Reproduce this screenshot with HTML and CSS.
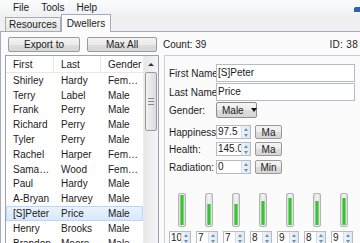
FILE: index.html
```html
<!DOCTYPE html>
<html lang="en">
<head>
    <meta charset="UTF-8">
    <title>Dwellers</title>
    <link rel="stylesheet" href="styles.css">
</head>
<body>
    <div class="menubar">
        <span>File</span>
        <span>Tools</span>
        <span>Help</span>
        <i class="app-icon"></i>
    </div>
    <div class="tabstrip">
        <div class="tab">Resources</div>
        <div class="tab active">Dwellers</div>
    </div>
    <div class="page">
        <div class="toolbar">
            <button class="btn export">Export to</button>
            <button class="btn maxall">Max All</button>
            <span class="count">Count: 39</span>
            <span class="dweller-id">ID: 38</span>
        </div>
        <div class="main">
            <div class="list">
                <div class="list-body">
                    <div class="list-head">
                        <span class="c1">First</span>
                        <span class="c2">Last</span>
                        <span class="c3">Gender</span>
                    </div>
                    <div id="rows"></div>
                </div>
                <div class="scrollbar">
                    <div class="sb-up"><i class="tri-up"></i></div>
                    <div class="sb-thumb"><i></i><i></i><i></i></div>
                </div>
            </div>

            <div class="detail">
                <div class="field">
                    <span class="label">First Name</span>
                    <div class="textbox">[S]Peter</div>
                </div>
                <div class="field second">
                    <span class="label">Last Name</span>
                    <div class="textbox">Price</div>
                </div>
                <div class="field gender">
                    <span class="label">Gender:</span>
                    <div class="combo">Male <i class="tri-down"></i></div>
                </div>
                <div class="field stat happy">
                    <span class="label">Happiness</span>
                    <div class="spin"><span class="spin-val">97.5</span><span class="spin-btns"><i class="tri-up"></i><i class="tri-down"></i></span></div>
                    <button class="btn small">Ma</button>
                </div>
                <div class="field stat health">
                    <span class="label">Health:</span>
                    <div class="spin"><span class="spin-val">145.0</span><span class="spin-btns"><i class="tri-up"></i><i class="tri-down"></i></span></div>
                    <button class="btn small">Ma</button>
                </div>
                <div class="field stat rad">
                    <span class="label">Radiation:</span>
                    <div class="spin"><span class="spin-val">0</span><span class="spin-btns"><i class="tri-up"></i><i class="tri-down"></i></span></div>
                    <button class="btn small">Min</button>
                </div>

                <div class="bars" id="bars"></div>
                <div class="special" id="special"></div>
            </div>
        </div>
    </div>

    <script>
        const dwellers = [
            ['Shirley', 'Hardy', 'Female'],
            ['Terry', 'Label', 'Male'],
            ['Frank', 'Perry', 'Male'],
            ['Richard', 'Perry', 'Male'],
            ['Tyler', 'Perry', 'Male'],
            ['Rachel', 'Harper', 'Female'],
            ['Samantha', 'Wood', 'Female'],
            ['Paul', 'Hardy', 'Male'],
            ['A-Bryan', 'Harvey', 'Male'],
            ['[S]Peter', 'Price', 'Male'],
            ['Henry', 'Brooks', 'Male'],
            ['Brandon', 'Moore', 'Male']
        ];
        const selected = 9;

        document.getElementById('rows').innerHTML = dwellers.map((d, i) =>
            `<div class="row${i === selected ? ' selected' : ''}">
                <span class="c1">${d[0]}</span><span class="c2">${d[1]}</span><span class="c3">${d[2]}</span>
            </div>`
        ).join('');

        // S.P.E.C.I.A.L. values, bars are out of 10
        const stats = [10, 7, 7, 8, 9, 8, 9];
        document.getElementById('bars').innerHTML = stats.map(v =>
            `<div class="bar"><div class="bar-fill" style="height: ${v * 10}%"></div></div>`
        ).join('');
        document.getElementById('special').innerHTML = stats.map(v =>
            `<div class="spin mini"><span class="spin-val">${v}</span><span class="spin-btns"><i class="tri-up"></i><i class="tri-down"></i></span></div>`
        ).join('');
    </script>
</body>
</html>
```

FILE: styles.css
```css
* {
    box-sizing: border-box;
}
body {
    margin: 0;
    width: 360px;
    height: 243px;
    overflow: hidden;
    font-family: "Liberation Sans", Arial, sans-serif;
    font-size: 10px;
    color: #1b1b1b;
    background: #f0f0f0;
}

/* menu */
.menubar {
    position: relative;
    height: 14px;
    display: flex;
    align-items: center;
    gap: 12px;
    padding-left: 13px;
    background: linear-gradient(#fbfcfd, #f0f2f5);
}
.app-icon {
    position: absolute;
    right: 0;
    top: 7px;
    width: 6px;
    height: 5px;
    background: #2a63b8;
    border-radius: 2px 0 0 0;
}

/* tabs */
.tabstrip {
    height: 18px;
    display: flex;
    align-items: flex-end;
    padding-left: 5px;
    border-bottom: 1px solid #a5acb5;
}
.tab {
    height: 14px;
    padding: 0 3px;
    line-height: 13px;
    border: 1px solid #a5acb5;
    border-bottom: none;
    background: linear-gradient(#f3f3f3, #e5e5e5);
}
.tab.active {
    position: relative;
    z-index: 1;
    height: 18px;
    margin-bottom: -1px;
    padding: 0 5px;
    line-height: 17px;
    background: #fbfbfb;
}

/* page */
.page {
    height: 211px;
    padding-left: 4px;
    border-left: 1px solid #a5acb5;
    background: #fbfbfb;
    overflow: hidden;
}
.toolbar {
    display: flex;
    align-items: center;
    height: 15px;
    margin-top: 5px;
    padding-left: 3px;
}
.btn {
    height: 15px;
    padding: 0;
    font-family: inherit;
    font-size: 10px;
    color: #1b1b1b;
    border: 1px solid #9a9a9a;
    border-radius: 2px;
    background: linear-gradient(#f4f4f4 0%, #ebebeb 50%, #dddddd 51%, #d6d6d6 100%);
}
.btn.export {
    width: 72px;
}
.btn.maxall {
    width: 70px;
    margin-left: 7px;
}
.count {
    margin-left: 6px;
}
.dweller-id {
    margin-left: auto;
    margin-right: 2px;
    letter-spacing: 0.3px;
}

.main {
    display: flex;
    gap: 5px;
    margin-top: 3px;
}

/* list */
.list {
    display: flex;
    flex-shrink: 0;
    width: 154px;
    height: 200px;
    border: 1px solid #9da3aa;
    background: #fff;
}
.list-body {
    flex: 1;
}
.list-head {
    display: flex;
    align-items: center;
    height: 17px;
    border-bottom: 1px solid #e8e8e8;
}
.list-head span {
    height: 100%;
    line-height: 17px;
    border-right: 1px solid #e8e8e8;
}
.list-head .c3 {
    border-right: none;
}
.row {
    display: flex;
    align-items: center;
    height: 14.8px;
}
.row.selected {
    background: linear-gradient(#eaf3fd, #d6e8fb);
    box-shadow: inset 0 0 0 1px #b8d6fb;
}
.c1, .c2, .c3 {
    padding-left: 7px;
    white-space: nowrap;
    overflow: hidden;
    text-overflow: ellipsis;
}
.c1 {
    width: 48px;
    padding-right: 0;
}
.c2 {
    width: 47px;
}
.c3 {
    width: 42px;
    padding-right: 2px;
}
.list-head .c3 {
    padding-right: 0;
}

.scrollbar {
    width: 15px;
    background: linear-gradient(90deg, #e8e8e8, #f5f5f5);
    border-left: 1px solid #ececec;
}
.sb-up {
    height: 16px;
    display: flex;
    justify-content: center;
    align-items: center;
}
.sb-thumb {
    height: 59px;
    margin: 0 1px;
    display: flex;
    flex-direction: column;
    justify-content: center;
    align-items: center;
    gap: 2px;
    border: 1px solid #9a9a9a;
    border-radius: 2px;
    background: linear-gradient(90deg, #f2f2f2, #dcdcdc);
}
.sb-thumb i {
    width: 6px;
    height: 1px;
    background: #8a8a8a;
}

.tri-up, .tri-down {
    display: block;
    width: 0;
    height: 0;
    border-left: 3px solid transparent;
    border-right: 3px solid transparent;
}
.tri-up {
    border-bottom: 3px solid #333;
}
.tri-down {
    border-top: 3px solid #333;
}

/* details */
.detail {
    flex-shrink: 0;
    width: 210px;
    height: 200px;
    padding: 8px 0 0 4px;
    border-left: 1px solid #c9cfd6;
    border-top: 1px solid #c9cfd6;
}
.field {
    display: flex;
    align-items: center;
}
.label {
    width: 47px;
    flex-shrink: 0;
    white-space: nowrap;
    overflow: hidden;
}
.textbox {
    width: 139px;
    height: 18px;
    padding-left: 1px;
    line-height: 16px;
    border: 1px solid #b5bcc4;
    background: #fff;
}
.field.second {
    margin-top: 1px;
}
.field.gender {
    margin-top: 1px;
}
.combo {
    display: flex;
    align-items: center;
    gap: 7px;
    width: 41px;
    height: 16px;
    padding-left: 5px;
    border: 1px solid #8e8e8e;
    border-radius: 2px;
    background: linear-gradient(#f4f4f4 0%, #ebebeb 50%, #dddddd 51%, #d6d6d6 100%);
}
.combo .tri-down {
    border-top-color: #111;
    border-left-width: 3.5px;
    border-right-width: 3.5px;
    border-top-width: 4px;
}
.field.happy {
    margin-top: 7px;
}
.field.health {
    margin-top: 3px;
}
.field.rad {
    margin-top: 4px;
}

.spin {
    display: flex;
    width: 35px;
    height: 14px;
    border: 1px solid #b5bcc4;
    background: #fff;
}
.spin-val {
    flex: 1;
    padding-left: 1px;
    line-height: 12px;
    overflow: hidden;
    white-space: nowrap;
}
.spin-btns {
    width: 9px;
    display: flex;
    flex-direction: column;
    justify-content: space-around;
    align-items: center;
    background: linear-gradient(90deg, #eef3f8, #dfe8f1);
    border-left: 1px solid #d4dde6;
}
.spin-btns .tri-up {
    border-bottom-color: #6f8fb5;
    border-left-width: 2.5px;
    border-right-width: 2.5px;
}
.spin-btns .tri-down {
    border-top-color: #6f8fb5;
    border-left-width: 2.5px;
    border-right-width: 2.5px;
}
.btn.small {
    width: 27px;
    height: 14px;
    margin-left: 4px;
}

/* special bars */
.bars {
    display: flex;
    gap: 19px;
    margin-top: 19px;
    padding-left: 9px;
}
.bar {
    display: flex;
    align-items: flex-end;
    width: 8px;
    height: 34px;
    padding: 1px;
    border: 1px solid #b4b4b4;
    border-radius: 2px;
    background: linear-gradient(90deg, #dcdcdc, #f4f4f4, #dcdcdc);
}
.bar-fill {
    width: 100%;
    background: linear-gradient(90deg, #8fe38f, #22b322 50%, #8fe38f);
}
.special {
    display: flex;
    gap: 5px;
    margin-top: 4px;
}
.spin.mini {
    width: 22px;
    height: 14px;
}
```
